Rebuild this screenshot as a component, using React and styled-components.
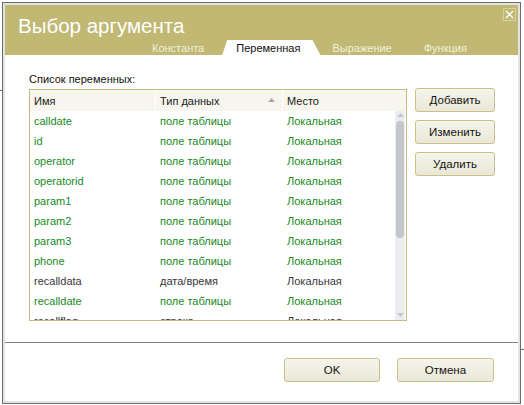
import React from 'react'
import styled, { createGlobalStyle } from 'styled-components'

const GlobalStyle = createGlobalStyle`
  html, body {
    margin: 0;
    padding: 0;
    background: #ffffff;
    font-family: 'Liberation Sans', Arial, sans-serif;
  }
`

const olive = '#c0b873'

const Page = styled.div`
  position: relative;
  width: 524px;
  height: 405px;
  padding: 2px 0 0 2px;
  box-sizing: border-box;
  overflow: hidden;
`

/* edges of the window lying behind the dialog */
const BackLine = styled.span`
  position: absolute;
  height: 1px;
  background: #707070;
  top: ${(p) => p.top}px;
  left: ${(p) => p.left}px;
  width: ${(p) => p.width}px;
`

const Window = styled.div`
  position: relative;
  width: 519px;
  height: 402px;
  box-sizing: border-box;
  border: 1px solid #6c6c6c;
  padding: 2px;
  background: #e3e3e3;
  display: flex;
`

const Inner = styled.div`
  flex: 1;
  display: flex;
  flex-direction: column;
  background: #ffffff;
`

const Header = styled.div`
  position: relative;
  height: 50px;
  flex: none;
  background: ${olive};
  display: flex;
  flex-direction: column;
  justify-content: space-between;
`

const Title = styled.div`
  padding: 9px 0 0 13px;
  font-size: 20.5px;
  line-height: 24px;
  color: #ffffff;
`

const CloseButton = styled.div`
  position: absolute;
  top: 3px;
  right: 2px;
  width: 13px;
  height: 13px;
  box-sizing: border-box;
  border: 1px solid #d6d1a4;
  display: flex;
  align-items: center;
  justify-content: center;
`

const TabRow = styled.div`
  display: flex;
  height: 15px;
  padding-left: 131px;
`

const Tab = styled.div`
  position: relative;
  z-index: 0;
  padding: 0 16px;
  font-size: 11px;
  line-height: 17px;
  white-space: nowrap;
  color: ${(p) => (p.active ? '#111111' : '#f3f0dc')};

  &::before {
    content: '';
    display: ${(p) => (p.active ? 'block' : 'none')};
    position: absolute;
    z-index: -1;
    top: 0;
    bottom: 0;
    left: 2px;
    right: -4px;
    background: #ffffff;
    clip-path: polygon(5px 0, calc(100% - 8px) 0, 100% 100%, 0 100%);
  }
`

const Body = styled.div`
  flex: 1;
  display: flex;
  gap: 8px;
  padding: 18px 0 0 24px;
`

const LeftColumn = styled.div`
  display: flex;
  flex-direction: column;
`

const Label = styled.div`
  font-size: 11px;
  line-height: 13px;
  color: #111111;
  margin-bottom: 3px;
`

const Table = styled.div`
  width: 378px;
  height: 232px;
  box-sizing: border-box;
  border: 1px solid #c4bc7e;
  display: flex;
  flex-direction: column;
  overflow: hidden;
`

const HeaderRow = styled.div`
  display: grid;
  grid-template-columns: 125px 126px 1fr;
  column-gap: 1px;
  height: 21px;
  flex: none;
  background: #ffffff;
`

const HeaderCell = styled.div`
  display: flex;
  align-items: center;
  justify-content: space-between;
  padding: 0 7px 0 4px;
  background: #f7f6ee;
  font-size: 11px;
  color: #1a1a1a;
`

const ListArea = styled.div`
  flex: 1;
  display: flex;
  min-height: 0;
`

const List = styled.div`
  flex: 1;
  overflow: hidden;
`

const Row = styled.div`
  display: grid;
  grid-template-columns: 125px 126px 1fr;
  column-gap: 1px;
  height: 20px;
  font-size: 11px;
  line-height: 20px;
  color: ${(p) => (p.local ? '#178a1c' : '#383838')};
`

const Cell = styled.div`
  padding-left: 4px;
  white-space: nowrap;
  overflow: hidden;
`

const Scrollbar = styled.div`
  width: 10px;
  margin-right: 1px;
  background: #ecedf1;
  display: flex;
  flex-direction: column;
  align-items: center;
`

const ScrollArrow = styled.div`
  display: flex;
  margin: ${(p) => (p.down ? 'auto 0 2px' : '2px 0 0')};
`

const Thumb = styled.div`
  width: 8px;
  height: 117px;
  border-radius: 4px;
  background: #c4c6cd;
  margin-top: 3px;
`

const ButtonColumn = styled.div`
  display: flex;
  flex-direction: column;
  gap: 8px;
  padding-top: 15px;
`

const Button = styled.div`
  width: ${(p) => p.width}px;
  height: 24px;
  box-sizing: border-box;
  border: 1px solid #c9c185;
  border-radius: 3px;
  background: linear-gradient(#f6f5ec, #e9e7d6);
  display: flex;
  align-items: center;
  justify-content: center;
  font-size: 11.5px;
  color: #141414;
`

const Footer = styled.div`
  height: 59px;
  flex: none;
  box-sizing: border-box;
  border-top: 1px solid #828282;
  display: flex;
  justify-content: flex-end;
  gap: 17px;
  padding: 15px 24px 0 0;
`

const rows = [
  ['calldate', 'поле таблицы', true],
  ['id', 'поле таблицы', true],
  ['operator', 'поле таблицы', true],
  ['operatorid', 'поле таблицы', true],
  ['param1', 'поле таблицы', true],
  ['param2', 'поле таблицы', true],
  ['param3', 'поле таблицы', true],
  ['phone', 'поле таблицы', true],
  ['recalldata', 'дата/время', false],
  ['recalldate', 'поле таблицы', true],
  ['recallflag', 'строка', false],
]

function Arrow({ down, color }) {
  return (
    <svg width="7" height="5" viewBox="0 0 7 5">
      <path d={down ? 'M0 0 L7 0 L3.5 4 Z' : 'M0 4 L7 4 L3.5 0 Z'} fill={color} />
    </svg>
  )
}

export default function App() {
  return (
    <Page>
      <GlobalStyle />
      <BackLine top={90} left={0} width={2} />
      <BackLine top={349} left={521} width={3} />
      <Window>
        <Inner>
          <Header>
            <Title>Выбор аргумента</Title>
            <CloseButton>
              <svg width="9" height="9" viewBox="0 0 9 9">
                <path d="M1 1 L8 8 M8 1 L1 8" stroke="#ffffff" strokeWidth="1.3" />
              </svg>
            </CloseButton>
            <TabRow>
              <Tab>Константа</Tab>
              <Tab active>Переменная</Tab>
              <Tab>Выражение</Tab>
              <Tab>Функция</Tab>
            </TabRow>
          </Header>
          <Body>
            <LeftColumn>
              <Label>Список переменных:</Label>
              <Table>
                <HeaderRow>
                  <HeaderCell>Имя</HeaderCell>
                  <HeaderCell>
                    Тип данных
                    <Arrow color="#a8a8a8" />
                  </HeaderCell>
                  <HeaderCell>Место</HeaderCell>
                </HeaderRow>
                <ListArea>
                  <List>
                    {rows.map(([name, type, local]) => (
                      <Row key={name} local={local}>
                        <Cell>{name}</Cell>
                        <Cell>{type}</Cell>
                        <Cell>Локальная</Cell>
                      </Row>
                    ))}
                  </List>
                  <Scrollbar>
                    <ScrollArrow>
                      <Arrow color="#c4c6cd" />
                    </ScrollArrow>
                    <Thumb />
                    <ScrollArrow down>
                      <Arrow down color="#c4c6cd" />
                    </ScrollArrow>
                  </Scrollbar>
                </ListArea>
              </Table>
            </LeftColumn>
            <ButtonColumn>
              <Button width={80}>Добавить</Button>
              <Button width={80}>Изменить</Button>
              <Button width={80}>Удалить</Button>
            </ButtonColumn>
          </Body>
          <Footer>
            <Button width={96}>OK</Button>
            <Button width={97}>Отмена</Button>
          </Footer>
        </Inner>
      </Window>
    </Page>
  )
}
